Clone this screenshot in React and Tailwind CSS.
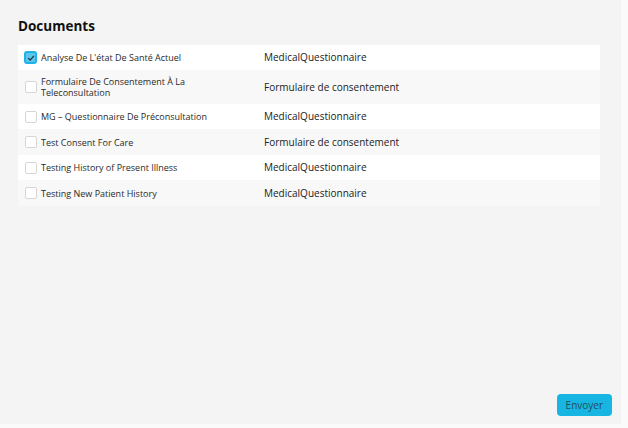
import React, { useState } from "react";

const docs = [
  { name: "Analyse De L'état De Santé Actuel", type: "MedicalQuestionnaire", checked: true, h: "h-[25px]" },
  { name: "Formulaire De Consentement À La Teleconsultation", type: "Formulaire de consentement", h: "h-[34px]" },
  { name: "MG – Questionnaire De Préconsultation", type: "MedicalQuestionnaire", h: "h-[25px]" },
  { name: "Test Consent For Care", type: "Formulaire de consentement", h: "h-[26px]" },
  { name: "Testing History of Present Illness", type: "MedicalQuestionnaire", h: "h-[25px]" },
  { name: "Testing New Patient History", type: "MedicalQuestionnaire", h: "h-[26px]" },
];

function CheckBox({ checked, onChange }) {
  return (
    <button
      type="button"
      onClick={onChange}
      className={
        checked
          ? "flex h-[13px] w-[13px] shrink-0 items-center justify-center rounded-[3px] border-2 border-[#1cb3e6] bg-[#5cc6ee]"
          : "ml-[1px] h-[12px] w-[12px] shrink-0 rounded-[2px] border border-[#d6d6d6] bg-white"
      }
    >
      {checked && (
        <svg viewBox="0 0 10 10" className="h-[8px] w-[8px]">
          <path d="M1.5 5.2 L4 7.6 L8.6 2.4" fill="none" stroke="#1f3440" strokeWidth="1.6" />
        </svg>
      )}
    </button>
  );
}

export default function App() {
  const [items, setItems] = useState(docs);

  const toggle = (i) =>
    setItems(items.map((d, idx) => (idx === i ? { ...d, checked: !d.checked } : d)));

  return (
    <div className="h-[428px] w-[628px] bg-[#fafafa]" style={{ fontFamily: "'Open Sans', sans-serif" }}>
      <div className="flex h-[424px] w-[621px] flex-col bg-[#f4f4f4] px-[18px] pt-[16px] pb-[8px]">
        <h2 className="text-[13.5px] font-bold text-[#111]">Documents</h2>

        <div className="mt-[9px] w-[582px]">
          {items.map((d, i) => (
            <div
              key={i}
              className={`flex items-center ${i % 2 === 0 ? "bg-white" : "bg-[#f8f8f8]"} ${d.h}`}
            >
              <div className="flex w-[246px] items-center gap-[4px] pl-[6px]">
                <CheckBox checked={d.checked} onChange={() => toggle(i)} />
                <span className="w-[185px] text-[9px] leading-[11px] text-[#2a2a2a]">{d.name}</span>
              </div>
              <span className="text-[10px] font-medium text-[#222]">{d.type}</span>
            </div>
          ))}
        </div>

        <div className="mt-auto flex justify-end">
          <button className="mr-[-9px] h-[22px] rounded-[4px] bg-[#17b6e2] px-[9px] text-[10px] font-medium text-[#264c5c]">
            Envoyer
          </button>
        </div>
      </div>
    </div>
  );
}
